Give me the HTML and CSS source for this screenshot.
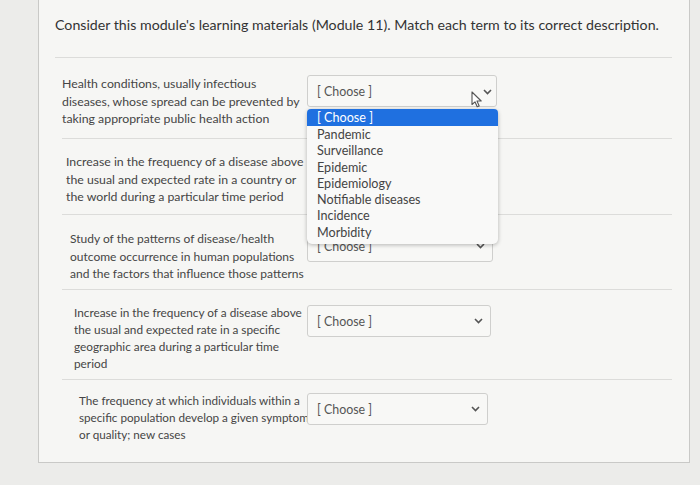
FILE: index.html
```html
<!DOCTYPE html>
<html>
<head>
<meta charset="utf-8">
<link rel="stylesheet" href="styles.css">
</head>
<body>
<div class="panel">
  <div class="header">Consider this module's learning materials (Module 11). Match each term to its correct description.</div>
  <div class="rows">
    <div class="row r1">
      <div class="desc">Health conditions, usually infectious<br>diseases, whose spread can be prevented by<br>taking appropriate public health action</div>
      <div class="select-wrap">
        <div class="select"><span>[ Choose ]</span>
          <svg class="cursor" width="12" height="17" viewBox="0 0 12 17"><path d="M1 1 L1 13.5 L4 10.8 L6.2 15.8 L8.2 14.9 L6 10 L10.2 10 Z" fill="#fff" stroke="#555" stroke-width="1.1" stroke-linejoin="round"/></svg>
          <svg class="chev" width="9" height="6" viewBox="0 0 9 6"><path d="M1 1 L4.5 4.5 L8 1" fill="none" stroke="#555" stroke-width="1.6"/></svg>
        </div>
        <ul class="dropdown">
          <li class="active">[ Choose ]</li>
          <li>Pandemic</li>
          <li>Surveillance</li>
          <li>Epidemic</li>
          <li>Epidemiology</li>
          <li>Notifiable diseases</li>
          <li>Incidence</li>
          <li>Morbidity</li>
        </ul>
      </div>
    </div>
    <div class="row r2">
      <div class="desc">Increase in the frequency of a disease above<br>the usual and expected rate in a country or<br>the world during a particular time period</div>
      <div class="select-wrap">
        <div class="select covered"><span>[ Choose ]</span>
          <svg class="chev" width="9" height="6" viewBox="0 0 9 6"><path d="M1 1 L4.5 4.5 L8 1" fill="none" stroke="#555" stroke-width="1.6"/></svg>
        </div>
      </div>
    </div>
    <div class="row r3">
      <div class="desc">Study of the patterns of disease/health<br>outcome occurrence in human populations<br>and the factors that influence those patterns</div>
      <div class="select-wrap">
        <div class="select"><span>[ Choose ]</span>
          <svg class="chev" width="9" height="6" viewBox="0 0 9 6"><path d="M1 1 L4.5 4.5 L8 1" fill="none" stroke="#555" stroke-width="1.6"/></svg>
        </div>
      </div>
    </div>
    <div class="row r4">
      <div class="desc">Increase in the frequency of a disease above<br>the usual and expected rate in a specific<br>geographic area during a particular time<br>period</div>
      <div class="select-wrap">
        <div class="select"><span>[ Choose ]</span>
          <svg class="chev" width="9" height="6" viewBox="0 0 9 6"><path d="M1 1 L4.5 4.5 L8 1" fill="none" stroke="#555" stroke-width="1.6"/></svg>
        </div>
      </div>
    </div>
    <div class="row r5">
      <div class="desc">The frequency at which individuals within a<br>specific population develop a given symptom<br>or quality; new cases</div>
      <div class="select-wrap">
        <div class="select"><span>[ Choose ]</span>
          <svg class="chev" width="9" height="6" viewBox="0 0 9 6"><path d="M1 1 L4.5 4.5 L8 1" fill="none" stroke="#555" stroke-width="1.6"/></svg>
        </div>
      </div>
    </div>
  </div>
</div>
</body>
</html>
```
FILE: styles.css
```css
html, body {
  margin: 0;
  padding: 0;
}
body {
  background: #ececea;
  font-family: Lato, "Open Sans", sans-serif;
  color: #3e3e3e;
  width: 700px;
  height: 485px;
  overflow: hidden;
}
.panel {
  margin-left: 38px;
  width: 652px;
  height: 463px;
  box-sizing: border-box;
  background: #f6f6f4;
  border: 1px solid #c9c9c7;
  border-top: none;
  display: flex;
  flex-direction: column;
}
.header {
  margin: 0 17px 0 16px;
  height: 58px;
  box-sizing: border-box;
  padding-top: 16px;
  font-size: 14.2px;
  color: #333;
  border-bottom: 1px solid #dcdcda;
}
.rows {
  flex: 1;
  display: flex;
  flex-direction: column;
  margin: 0 17px 0 23px;
}
.row {
  display: grid;
  grid-template-columns: 245px 190px;
  align-items: start;
  border-bottom: 1px solid #dcdcda;
  box-sizing: border-box;
}
.r1 { height: 81px; padding-top: 17px; }
.r2 { height: 76px; padding-top: 14px; }
.r3 { height: 75px; padding-top: 15px; }
.r4 { height: 90px; padding-top: 14px; }
.r5 { flex: 1; padding-top: 12px; border-bottom: none; }
.desc {
  font-size: 12.3px;
  line-height: 17.5px;
  color: #454545;
  white-space: nowrap;
}
.r2 .desc { padding-left: 4px; }
.r3 .desc { padding-left: 8px; font-size: 12px; }
.r4 .desc { padding-left: 12px; font-size: 11.8px; line-height: 17px; }
.r5 .desc { padding-left: 17px; font-size: 11.7px; line-height: 17px; }
.select-wrap {
  position: relative;
}
.r4 .select-wrap { margin-top: 1px; }
.r5 .select-wrap { margin-top: 1px; }
.select {
  position: relative;
  width: 190px;
  height: 32px;
  box-sizing: border-box;
  border: 1px solid #cfcfcd;
  border-radius: 3px;
  background: #f8f8f6;
  font-size: 12.4px;
  color: #555;
  padding: 8px 0 0 9px;
}
.select.covered { visibility: hidden; }
.r3 .select { width: 186px; }
.r4 .select { width: 184px; }
.r5 .select { width: 181px; }
.chev {
  position: absolute;
  right: 7px;
  top: 12px;
}
.r1 .chev { top: 13px; right: 4px; }
.cursor {
  position: absolute;
  right: 13px;
  top: 15px;
}
.dropdown {
  position: absolute;
  left: 0;
  top: 34px;
  width: 191px;
  margin: 0;
  padding: 0 0 3px 0;
  list-style: none;
  background: #f9f9f8;
  border-radius: 5px;
  box-shadow: 0 1px 4px rgba(0,0,0,0.28);
  z-index: 5;
}
.dropdown li {
  font-size: 12.6px;
  line-height: 16.3px;
  padding-left: 10px;
  color: #444;
}
.dropdown li.active {
  background: #1f70e0;
  color: #fff;
  border-radius: 4px 4px 0 0;
  line-height: 17px;
  margin-bottom: 1px;
}
```
